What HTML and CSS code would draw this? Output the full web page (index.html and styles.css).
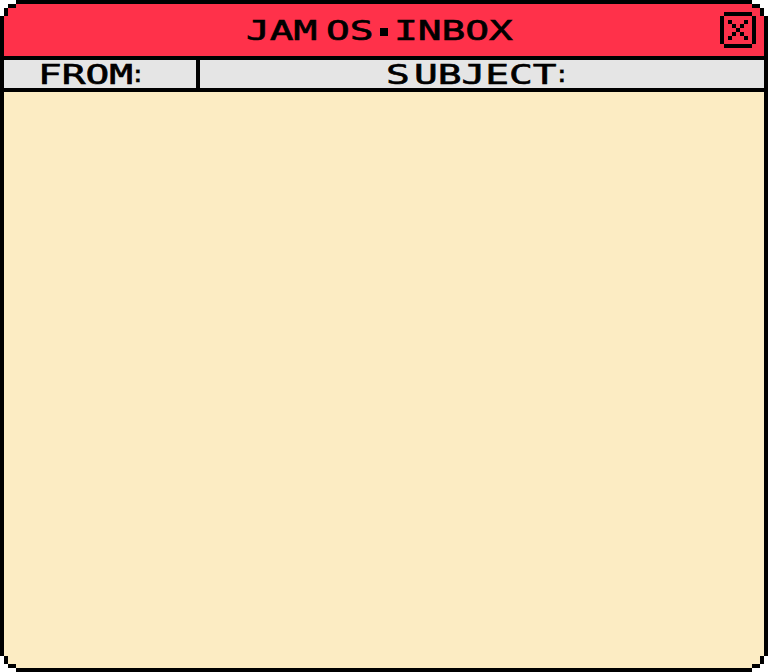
FILE: index.html
```html
<!DOCTYPE html>
<html lang="en">
<head>
<meta charset="utf-8">
<title>JAM OS Inbox</title>
<link rel="stylesheet" href="styles.css">
</head>
<body>
<main class="window">
  <header class="titlebar">
    <h1 class="label title"><span class="word w3"><span>JAM</span></span><span class="word w2 gap"><span>OS</span></span><i class="dot"></i><span class="word w5"><span>INBOX</span></span></h1>
    <button class="close" aria-label="Close">
      <svg viewBox="0 0 9 9" width="36" height="36" shape-rendering="crispEdges"><path d="M1 0h7v1H1zM1 8h7v1H1zM0 1h1v7H0zM8 1h1v7H8zM2 2h1v1H2zM6 2h1v1H6zM3 3h1v1H3zM5 3h1v1H5zM4 4h1v1H4zM3 5h1v1H3zM5 5h1v1H5zM2 6h1v1H2zM6 6h1v1H6z"/></svg>
    </button>
  </header>
  <div class="columns">
    <div class="label from"><span class="word w4"><span>FROM</span></span><span class="colon">:</span></div>
    <div class="label subject"><span class="word w1"><span>S</span></span><span class="word w6"><span>UBJECT</span></span><span class="colon">:</span></div>
  </div>
  <section class="messages"></section>
  <svg class="corner tl" viewBox="0 0 4 4"><path class="outside" d="M0 0h4v1H2v1H1v2H0z"/><path d="M2 1h2v1H2zM1 2h1v2H1z"/></svg>
  <svg class="corner tr" viewBox="0 0 4 4"><path class="outside" d="M0 0h4v1H2v1H1v2H0z"/><path d="M2 1h2v1H2zM1 2h1v2H1z"/></svg>
  <svg class="corner bl" viewBox="0 0 4 4"><path class="outside" d="M0 0h4v1H2v1H1v2H0z"/><path d="M2 1h2v1H2zM1 2h1v2H1z"/></svg>
  <svg class="corner br" viewBox="0 0 4 4"><path class="outside" d="M0 0h4v1H2v1H1v2H0z"/><path d="M2 1h2v1H2zM1 2h1v2H1z"/></svg>
</main>
</body>
</html>
```
FILE: styles.css
```css
* { box-sizing: border-box; }
body { margin: 0; background: #fff; color: #000; }
.window {
  position: relative;
  width: 768px;
  height: 672px;
  border: 4px solid #000;
  background: #fcecc3;
  display: flex;
  flex-direction: column;
}
.titlebar {
  height: 56px;
  flex: none;
  background: #ff314a;
  border-bottom: 4px solid #000;
  display: grid;
  grid-template-columns: 44px 1fr 44px;
  align-items: center;
}
.title { grid-column: 2; justify-content: center; margin: 0 8px 0 0; }
.close {
  width: 36px;
  height: 36px;
  padding: 0;
  border: 0;
  background: none;
}
.close svg { display: block; }
.columns {
  height: 32px;
  flex: none;
  display: grid;
  grid-template-columns: 196px 1fr;
  background: #e5e5e5;
  border-bottom: 4px solid #000;
}
.label {
  display: flex;
  align-items: center;
  font: 400 26.5px/29px "DejaVu Sans Mono", monospace;
  -webkit-text-stroke: 0.6px #000;
  white-space: nowrap;
}
.word { display: block; height: 28px; flex: none; }
.word > span { display: inline-block; transform: scaleX(1.49); transform-origin: 0 50%; }
.w1 { width: 24px; margin-right: 4px; }
.w2 { width: 48px; }
.w3 { width: 72px; }
.w4 { width: 96px; }
.w5 { width: 120px; }
.w6 { width: 144px; }
.gap { margin-left: 8px; }
.dot { width: 8px; height: 8px; margin: 4px 6px 0; background: #000; }
.colon {
  width: 8px;
  font: 700 23px/24px "Liberation Sans", sans-serif;
  margin-top: 0;
  -webkit-text-stroke: 0.3px #000;
}
.from { padding-left: 34px; border-right: 4px solid #000; }
.subject { padding-left: 186px; }
.messages { flex: 1; }
.corner {
  position: absolute;
  width: 16px;
  height: 16px;
  shape-rendering: crispEdges;
}
.outside { fill: #fff; }
.tl { top: -4px; left: -4px; }
.tr { top: -4px; right: -4px; transform: scaleX(-1); }
.bl { bottom: -4px; left: -4px; transform: scaleY(-1); }
.br { bottom: -4px; right: -4px; transform: scale(-1); }
```
